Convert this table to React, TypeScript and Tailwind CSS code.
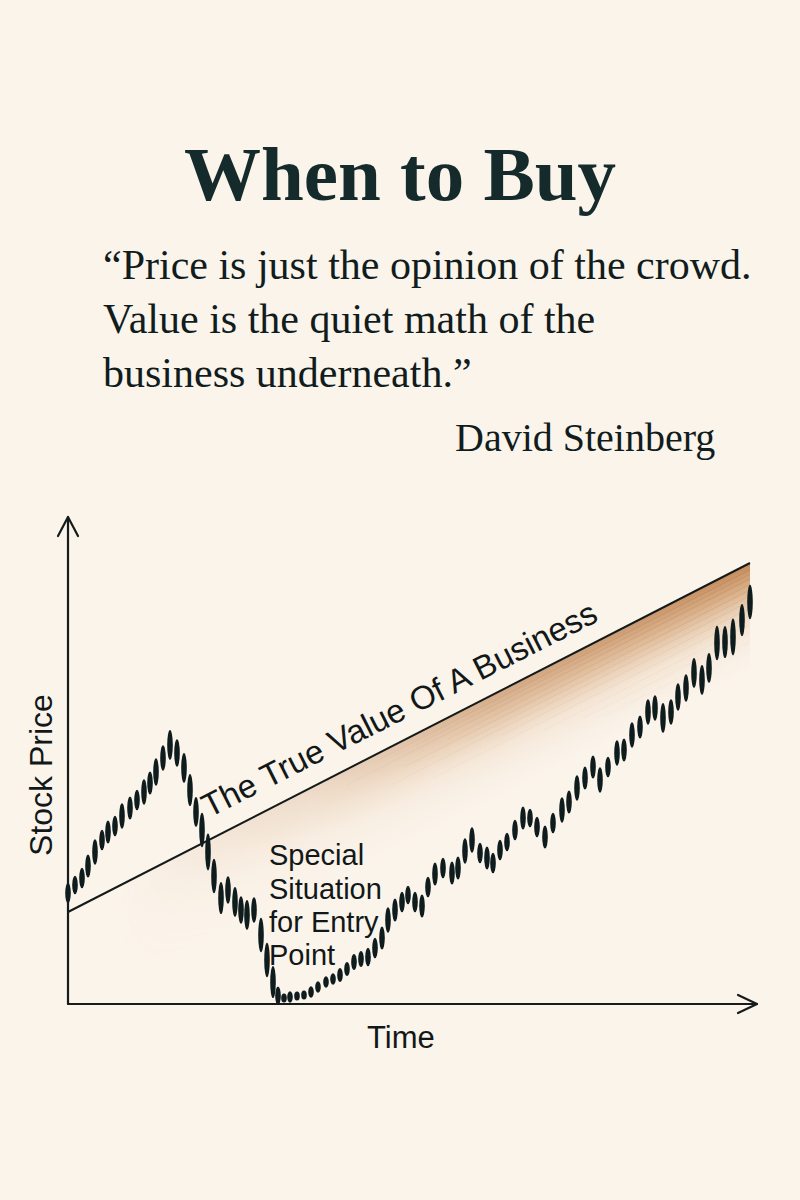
import React from "react";

const candles: [number, number, number][] = [
  [68, 893, 18], [75, 885, 16], [82, 878, 18], [88, 866, 20], [95, 852, 22], [102, 840, 18],
  [108, 832, 20], [115, 826, 18], [122, 816, 22], [130, 808, 20], [137, 800, 18], [144, 792, 22],
  [150, 783, 20], [156, 772, 24], [163, 758, 22], [170, 745, 26],
  [177, 753, 24], [184, 768, 26], [190, 790, 28], [196, 812, 26], [202, 830, 30], [208, 852, 32],
  [214, 876, 30], [221, 898, 28], [228, 890, 24], [235, 902, 26], [241, 910, 24], [247, 915, 26],
  [254, 910, 22], [261, 935, 30], [267, 960, 30], [273, 982, 28], [278, 998, 16],
  [284, 998, 8], [290, 997, 10], [297, 996, 8], [304, 995, 8], [311, 992, 10], [318, 987, 10],
  [326, 982, 10], [333, 979, 10], [340, 975, 12], [347, 969, 12], [354, 962, 14], [361, 959, 14],
  [368, 957, 16], [375, 948, 18], [382, 938, 20], [388, 920, 22], [395, 910, 20], [402, 902, 18],
  [408, 895, 16], [415, 902, 18], [422, 906, 20], [428, 887, 18], [435, 874, 20], [443, 868, 18],
  [452, 873, 20], [458, 868, 20], [465, 851, 22], [472, 840, 22], [480, 853, 18], [487, 858, 20],
  [493, 863, 18],
  [500, 850, 18], [507, 842, 16], [515, 830, 18], [523, 818, 20], [530, 818, 16], [537, 827, 18],
  [545, 837, 20], [553, 823, 18], [562, 810, 22], [569, 802, 20], [577, 788, 22], [585, 778, 20],
  [593, 767, 20], [600, 780, 22], [608, 767, 18], [617, 753, 22], [624, 750, 20], [632, 735, 22],
  [640, 727, 20], [648, 712, 22], [655, 708, 22], [663, 718, 26], [671, 712, 22], [678, 697, 24],
  [686, 688, 24], [694, 673, 26], [702, 680, 26], [709, 668, 26], [717, 643, 30], [725, 642, 28],
  [733, 637, 32], [742, 620, 28], [750, 602, 30],
];

// faint brush streaks parallel to the value line
const streaks: [number, number, number][] = [
  [6, 0.35, 420], [10, 0.25, 380], [14, 0.3, 460], [19, 0.2, 350], [24, 0.22, 400],
  [29, 0.15, 330], [34, 0.14, 420], [40, 0.1, 300], [47, 0.08, 380], [55, 0.06, 260],
  [62, 0.05, 220], [70, 0.04, 200],
];

export default function App() {
  const x0 = 68;
  const y0 = 912;
  const x1 = 750;
  const y1 = 563;
  const dx = x1 - x0;
  const dy = y1 - y0;
  const len = Math.sqrt(dx * dx + dy * dy);
  const nx = -dy / len; // perpendicular pointing down-right
  const ny = dx / len;
  return (
    <div className="w-[800px] h-[1200px] bg-[#fbf4eb] flex flex-col overflow-hidden font-['Liberation_Serif',serif]">
      <h1 className="pt-[130px] text-center text-[77px] leading-[88px] font-bold text-[#142a2b]">
        When to Buy
      </h1>
      <p className="mt-[20px] pl-[103px] text-[42px] leading-[54px] text-[#111c1d]">
        “Price is just the opinion of the crowd.
        <br />
        Value is the quiet math of the
        <br />
        business underneath.”
      </p>
      <p className="mt-[14px] pl-[455px] text-[40px] leading-[48px] text-[#111c1d]">
        David Steinberg
      </p>
      <svg
        className="block mt-[18px]"
        width="800"
        height="600"
        viewBox="0 480 800 600"
      >
        <defs>
          <linearGradient
            id="shade"
            gradientUnits="userSpaceOnUse"
            x1={409}
            y1={737.5}
            x2={409 + nx * 95}
            y2={737.5 + ny * 95}
          >
            <stop offset="0" stopColor="#bf8352" stopOpacity="0.95" />
            <stop offset="0.22" stopColor="#cb935f" stopOpacity="0.7" />
            <stop offset="0.55" stopColor="#e2bb96" stopOpacity="0.3" />
            <stop offset="1" stopColor="#f3e2d0" stopOpacity="0" />
          </linearGradient>
          <linearGradient id="fade" gradientUnits="userSpaceOnUse" x1="120" y1="0" x2="750" y2="0">
            <stop offset="0" stopColor="#fff" stopOpacity="0" />
            <stop offset="0.3" stopColor="#fff" stopOpacity="0.25" />
            <stop offset="0.6" stopColor="#fff" stopOpacity="0.7" />
            <stop offset="1" stopColor="#fff" stopOpacity="1" />
          </linearGradient>
          <mask id="fm">
            <rect x="0" y="480" width="750" height="523" fill="url(#fade)" />
          </mask>
        </defs>
        <g mask="url(#fm)">
          <polygon
            points={`${x0},${y0} ${x1},${y1} ${x1 + nx * 120},${y1 + ny * 120} ${x0 + nx * 120},${y0 + ny * 120}`}
            fill="url(#shade)"
          />
          {streaks.map(([off, op, l], i) => {
            const ex = x1 + nx * off;
            const ey = y1 + ny * off;
            const sx = ex - (dx / len) * l;
            const sy = ey - (dy / len) * l;
            return (
              <line
                key={i}
                x1={sx}
                y1={sy}
                x2={ex}
                y2={ey}
                stroke="#a96f40"
                strokeOpacity={op}
                strokeWidth="1"
              />
            );
          })}
        </g>
        {/* value line */}
        <line x1={x0} y1={y0} x2={x1} y2={y1} stroke="#141a1a" strokeWidth="2" />
        {/* axes */}
        <g stroke="#161c1c" strokeWidth="2.2" fill="none" strokeLinecap="round" strokeLinejoin="round">
          <line x1="68" y1="517" x2="68" y2="1004" />
          <line x1="68" y1="1004" x2="757" y2="1004" />
          <polyline points="58,536 68,517 78,536" />
          <polyline points="738,995 757,1004 738,1013" />
        </g>
        {/* candles */}
        <g fill="#0f1c1d">
          {candles.map(([cx, cy, h], i) => {
            const hh = h * 1.15;
            return (
              <ellipse key={i} cx={cx} cy={Math.min(cy, 1003 - hh / 2 + 2)} rx="2.8" ry={hh / 2} />
            );
          })}
        </g>
        {/* labels */}
        <g fontFamily="'Liberation Sans', Arial, sans-serif" fill="#121818">
          <text x="209" y="818" fontSize="33" transform="rotate(-26.8 209 818)">
            The True Value Of A Business
          </text>
          <text fontSize="29">
            <tspan x="269" y="865">Special</tspan>
            <tspan x="269" y="899">Situation</tspan>
            <tspan x="269" y="932">for Entry</tspan>
            <tspan x="269" y="965">Point</tspan>
          </text>
          <text x="367" y="1048" fontSize="31">
            Time
          </text>
          <text x="52" y="775" fontSize="32" textAnchor="middle" transform="rotate(-90 52 775)">
            Stock Price
          </text>
        </g>
      </svg>
    </div>
  );
}
